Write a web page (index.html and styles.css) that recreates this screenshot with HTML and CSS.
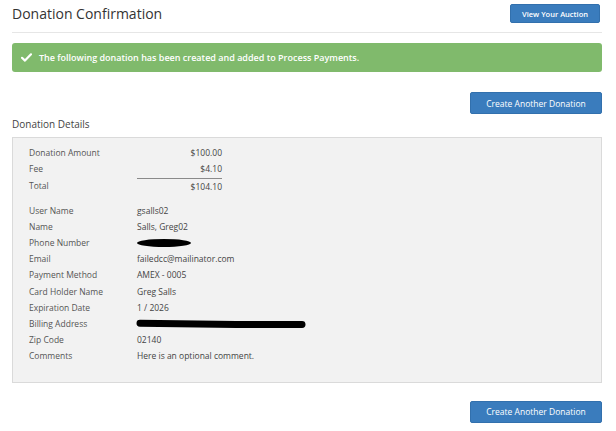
FILE: index.html
```html
<!DOCTYPE html>
<html lang="en">
<head>
  <meta charset="UTF-8" />
  <title>Donation Confirmation</title>
  <link rel="stylesheet" href="styles.css">
</head>
<body>
  <div class="page">
    <div class="page-header">
      <h1>Donation Confirmation</h1>
      <button class="btn btn-auction">View Your Auction</button>
    </div>

    <div class="alert-success">
      <svg class="check" width="11" height="9" viewBox="0 0 11 9">
        <path d="M1 4.8 L4 7.6 L10 1.3" fill="none" stroke="#fff" stroke-width="2.2" stroke-linecap="round" stroke-linejoin="round"/>
      </svg>
      <span>The following donation has been created and added to Process Payments.</span>
    </div>

    <div class="actions">
      <button class="btn btn-create">Create Another Donation</button>
    </div>

    <h2 class="section-title">Donation Details</h2>

    <div class="details-box">
      <div class="row"><span class="label">Donation Amount</span><span class="amount">$100.00</span></div>
      <div class="row"><span class="label">Fee</span><span class="amount">$4.10</span></div>
      <div class="row total"><span class="label">Total</span><span class="amount">$104.10</span></div>

      <div class="group">
        <div class="row"><span class="label">User Name</span><span class="value">gsalls02</span></div>
        <div class="row"><span class="label">Name</span><span class="value">Salls, Greg02</span></div>
        <div class="row"><span class="label">Phone Number</span><span class="value"><span class="redact-phone"></span></span></div>
        <div class="row"><span class="label">Email</span><span class="value">failedcc@mailinator.com</span></div>
        <div class="row"><span class="label">Payment Method</span><span class="value">AMEX - 0005</span></div>
        <div class="row"><span class="label">Card Holder Name</span><span class="value">Greg Salls</span></div>
        <div class="row"><span class="label">Expiration Date</span><span class="value">1 / 2026</span></div>
        <div class="row"><span class="label">Billing Address</span><span class="value">
          <svg class="redact-address" width="170" height="10" viewBox="0 0 170 10">
            <path d="M4 4.2 C40 4.8 70 5.2 100 5.4 C130 5.6 150 5.8 166 5.4" fill="none" stroke="#000" stroke-width="7" stroke-linecap="round"/>
          </svg>
        </span></div>
        <div class="row"><span class="label">Zip Code</span><span class="value">02140</span></div>
        <div class="row"><span class="label">Comments</span><span class="value">Here is an optional comment.</span></div>
      </div>
    </div>

    <div class="actions bottom">
      <button class="btn btn-create">Create Another Donation</button>
    </div>
  </div>
</body>
</html>
```

FILE: styles.css
```css
body {
  margin: 0;
  font-family: "Open Sans", "Liberation Sans", sans-serif;
  background: #fff;
  color: #444;
}
.page {
  padding: 0 14px 0 12px;
}
.page-header {
  display: flex;
  justify-content: space-between;
  align-items: flex-start;
  height: 32px;
  border-bottom: 1px solid #e6e6e6;
}
.page-header h1 {
  margin: 4px 0 0 0;
  font-size: 14px;
  font-weight: 400;
  line-height: 20px;
  color: #333;
}
.btn {
  font-family: "Open Sans", "Liberation Sans", sans-serif;
  background: #3a7cbd;
  border: 1px solid #3270ad;
  border-radius: 2px;
  color: #fff;
  padding: 0;
  cursor: pointer;
}
.btn-auction {
  margin: 4px 2px 0 0;
  width: 90px;
  height: 19px;
  font-size: 7.5px;
  font-weight: 600;
}
.alert-success {
  display: flex;
  align-items: center;
  gap: 7px;
  margin-top: 10px;
  height: 29px;
  padding-left: 9px;
  background: #80ba6c;
  border-radius: 3px;
  color: #fff;
  font-size: 9px;
  font-weight: 600;
}
.check {
  flex: none;
}
.actions {
  display: flex;
  justify-content: flex-end;
  margin-top: 20px;
}
.actions.bottom {
  margin-top: 18px;
}
.btn-create {
  width: 132px;
  height: 22px;
  font-size: 8.5px;
}
.section-title {
  margin: 3px 0 6px 0;
  font-size: 10px;
  font-weight: 400;
  line-height: 14px;
  color: #444;
}
.details-box {
  background: #f2f2f2;
  border: 1px solid #dadada;
  padding: 7px 16px 17px 16px;
  font-size: 8.5px;
  color: #555;
}
.row {
  display: flex;
  line-height: 16.2px;
}
.label {
  flex: none;
  width: 108px;
}
.amount {
  flex: none;
  width: 85px;
  text-align: right;
  color: #444;
}
.value {
  color: #444;
  display: flex;
  align-items: center;
}
.row.total {
  margin-top: 1px;
}
.row.total .amount {
  border-top: 1px solid #8a8a8a;
}
.group {
  margin-top: 7px;
}
.redact-phone {
  display: inline-block;
  width: 54px;
  height: 8px;
  background: #000;
  border-radius: 50%;
}
.redact-address {
  display: block;
  margin-left: -1px;
}
```
